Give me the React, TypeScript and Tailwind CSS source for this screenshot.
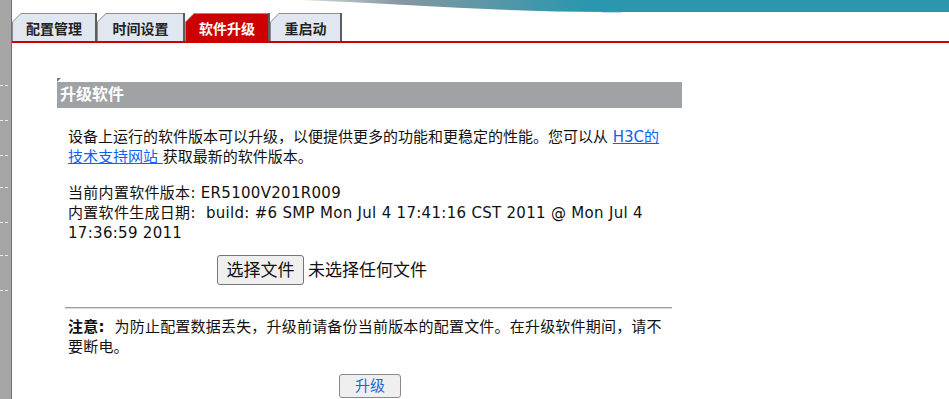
import React from 'react';

const tabs = [
  { label: '配置管理', width: 'w-[85px]', active: false },
  { label: '时间设置', width: 'w-[88px]', active: false },
  { label: '软件升级', width: 'w-[85px]', active: true },
  { label: '重启动', width: 'w-[72px]', active: false },
];

function SideStrip() {
  const gaps = ['mt-[85px]', 'mt-[34px]', 'mt-[34px]', 'mt-[31px]', 'mt-[34px]', 'mt-[32px]', 'mt-[34px]'];
  return (
    <div className="flex w-[12px] shrink-0 flex-col border-r border-[#6e6e6e] bg-[#a6a6a6]">
      {gaps.map((g, i) => (
        <div key={i} className={`${g} flex gap-[2px]`}>
          <span className="h-px w-[3px] bg-[#ececec]" />
          <span className="h-px w-[3px] bg-[#ececec]" />
        </div>
      ))}
    </div>
  );
}

function TopBanner() {
  return (
    <div className="h-[13px]">
      <svg className="block h-full w-full" viewBox="0 0 937 13" preserveAspectRatio="none">
        <defs>
          <linearGradient id="band" x1="290" y1="0" x2="570" y2="0" gradientUnits="userSpaceOnUse">
            <stop offset="0" stopColor="#d4d8da" />
            <stop offset="0.35" stopColor="#8597a0" />
            <stop offset="1" stopColor="#2b97ae" />
          </linearGradient>
        </defs>
        <path d="M290 0 L937 0 L937 12 L592 12 C490 12 390 4 290 0 Z" fill="url(#band)" />
        <path d="M592 12 L610 12 L610 13 L588 13 Z" fill="#b6dfe7" />
      </svg>
    </div>
  );
}

function Tabs() {
  return (
    <div className="flex h-[28px] items-end">
      {tabs.map((t) => (
        <div
          key={t.label}
          className={`${t.width} h-[28px] border-r-2 border-[#5c5c5c] bg-[#8e8e8e] pl-px pt-px [clip-path:polygon(0_9px,9px_0,100%_0,100%_100%,0_100%)]`}
        >
          <div
            className={`flex h-full items-center justify-center pt-[3px] text-[14px] font-bold [clip-path:polygon(0_8px,8px_0,100%_0,100%_100%,0_100%)] ${
              t.active ? 'bg-[#cc0000] text-white' : 'bg-[#e0e7f0] text-[#222]'
            }`}
          >
            {t.label}
          </div>
        </div>
      ))}
    </div>
  );
}

function UpgradePanel() {
  return (
    <div className="ml-[45px] w-[625px] pt-[35px]">
      <svg width="4" height="4" className="block">
        <polygon points="0,0 4,0 0,4" fill="#7a7a7a" />
      </svg>
      <div className="flex h-[26px] items-center bg-[#a0a3a6] pl-[3px] text-[16px] font-bold text-white">
        升级软件
      </div>

      <div className="ml-[8px] w-[607px] pt-[19px] text-[15px] leading-[20px]">
        <p className="px-[3px]">
          设备上运行的软件版本可以升级，以便提供更多的功能和更稳定的性能。您可以从{' '}
          <a href="#" className="text-[#0b63f6] underline">
            H3C的
            <br />
            技术支持网站{' '}
          </a>
          获取最新的软件版本。
        </p>

        <p className="mt-[16px] px-[3px] tracking-[0.3px]">
          当前内置软件版本: ER5100V201R009
          <br />
          内置软件生成日期:{'\u00a0'} build: #6 SMP Mon Jul 4 17:41:16 CST 2011 @ Mon Jul 4
          <br />
          17:36:59 2011
        </p>

        {/* file chooser */}
        <div className="ml-[152px] mt-[12px] flex items-center">
          <button className="h-[30px] w-[87px] rounded-[3px] border border-[#767676] bg-[#efefef] text-[17px] text-[#111]">
            选择文件
          </button>
          <span className="ml-[4px] text-[17px]">未选择任何文件</span>
        </div>

        <div className="mt-[22px] h-[2px] border-t border-b border-t-[#9c9c9c] border-b-[#dcdcdc]" />

        <p className="mt-[8px] px-[3px] tracking-[0.2px]">
          <b className="font-bold">注意:</b>{'\u00a0'} 为防止配置数据丢失，升级前请备份当前版本的配置文件。在升级软件期间，请不
          <br />
          要断电。
        </p>

        <div className="mt-[17px] flex justify-center pl-[3px]">
          <button className="h-[24px] w-[62px] rounded-[3px] border border-[#8a8a8a] bg-[#efefef] text-[15px] leading-none text-[#1769e0]">
            升级
          </button>
        </div>
      </div>
    </div>
  );
}

export default function App() {
  return (
    <div className="flex h-screen w-full overflow-hidden bg-white font-['DejaVu_Sans','Noto_Sans_CJK_SC',sans-serif] text-[#111]">
      <SideStrip />
      <div className="flex min-w-0 flex-1 flex-col">
        <TopBanner />
        <Tabs />
        <div className="h-[2px] bg-[#cc0000]" />
        <UpgradePanel />
      </div>
    </div>
  );
}
